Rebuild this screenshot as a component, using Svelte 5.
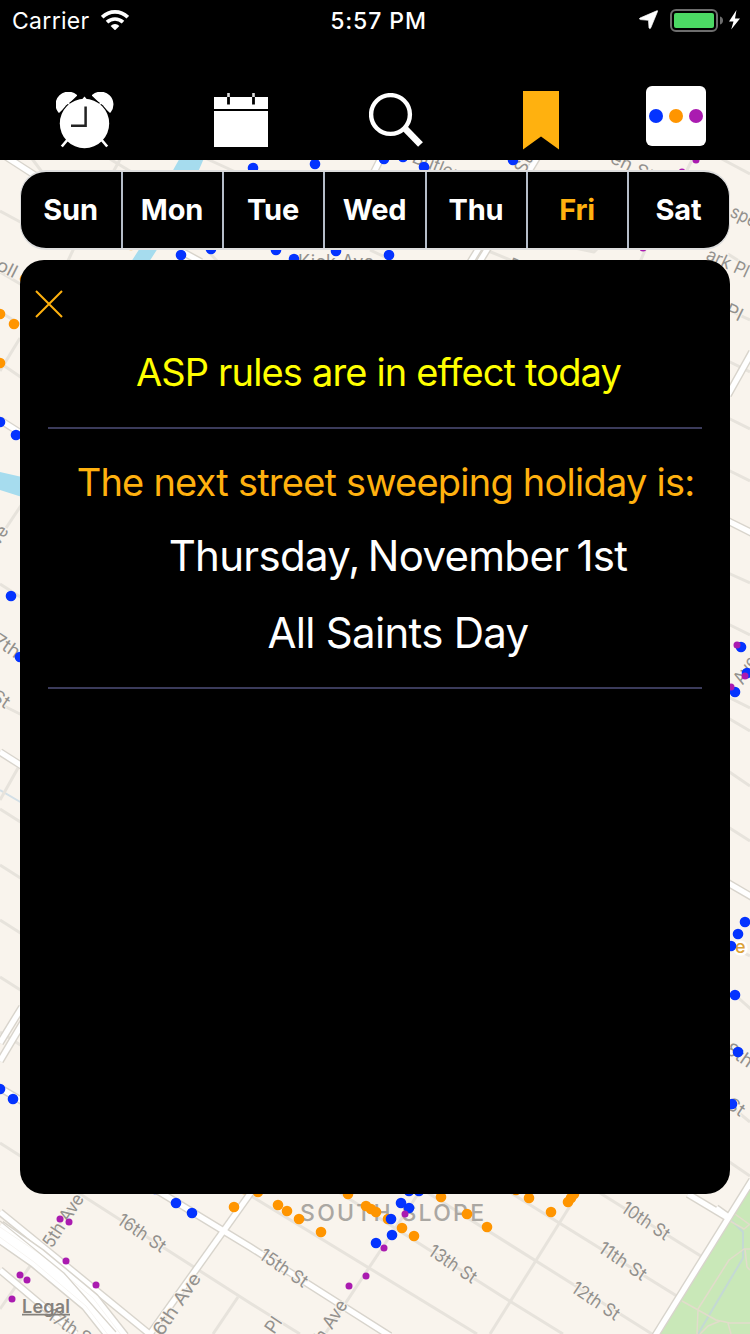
<script>
  const days = ['Sun', 'Mon', 'Tue', 'Wed', 'Thu', 'Fri', 'Sat'];
  const activeDay = 'Fri';

  const minorRoads = [
    'M80 1194L250 1303L300 1334', 'M86 1186L0 1309', 'M238 1297L213 1334', 'M248 1194L477 1334',
    'M418 1194L325 1334', 'M340 1193L500 1295L563 1334', 'M428 1193L652 1334', 'M511 1193L680 1298',
    'M600 1193L704 1258', 'M580 1190L490 1334', 'M74 248L66 265', 'M0 272L22 285', 'M20 338L0 371',
    'M3 365L22 378', 'M0 312L20 324', 'M22 504L6 528', 'M0 584L22 598', 'M4 706L22 715',
    'M18 768L0 800', 'M0 809L22 823', 'M0 865L22 879', 'M0 920L22 934', 'M0 977L22 991',
    'M0 1032L22 1046', 'M0 1143L22 1157', 'M105 156L148 182', 'M122 156L112 174', 'M205 158L240 174',
    'M0 211L24 224', 'M30 156L42 172', 'M728 254L750 268', 'M728 310L750 320', 'M728 361L750 372', 'M728 418L750 429',
    'M728 470L750 481', 'M728 573L750 583', 'M728 624L750 635', 'M728 697L750 708', 'M728 718L750 731',
    'M728 771L750 786', 'M728 827L750 841', 'M728 945L750 956', 'M735 995L752 1010', 'M728 1104L750 1122',
    'M728 1161L750 1176', 'M694 156L684 176', 'M720 158L750 174', 'M486 250L520 264', 'M575 248L594 252L600 246', 'M646 248L640 262', 'M370 250L400 264', 'M205 248L218 262'
  ];
  const majorRoads = [
    'M0 1212L152 1336', 'M0 1270L76 1334', 'M158 1191L250 1247L390 1336', 'M252 1191L150 1334',
    'M688 1194L728 1218', 'M752 1180L655 1336', 'M5 156L36 176', 'M0 420L22 434', 'M0 752L22 766',
    'M22 1007L0 1043', 'M28 1014L0 1061', 'M0 1088L22 1101', 'M752 352L728 395',
    'M728 521L752 533', 'M728 883L752 897', 'M179 250L201 262', 'M538 156L526 176', 'M479 248L468 266', 'M488 248L477 266', 'M382 156L372 176', 'M716 1208L730 1218'
  ];
  const blue = [
    [253,168],[315,164],[384,159],[403,157],[424,167],[513,160],[181,255],[211,249],[276,250],[294,259],
    [336,251],[389,255],[0,422],[16,435],[11,596],[20,657],[0,1089],[13,1099],[176,1203],[192,1213],
    [155,1189],[401,1203],[409,1208],[391,1219],[392,1235],[376,1243],[409,1191],[419,1191],[741,647],
    [747,673],[735,692],[745,922],[738,934],[731,946],[735,995],[738,1052],[732,1104]
  ];
  const orange = [
    [0,314],[14,324],[0,363],[25,279],[131,245],[234,1207],[258,1192],[244,1189],[278,1205],[287,1211],
    [299,1219],[321,1232],[348,1194],[366,1206],[371,1209],[376,1212],[388,1219],[402,1228],[414,1236],
    [441,1197],[467,1214],[487,1227],[529,1198],[551,1212],[516,1190],[568,1202],[571,1198],[574,1194]
  ];
  const purple = [
    [60,1219],[69,1222],[66,1261],[96,1285],[20,1275],[27,1280],[12,1299],[405,1214],[384,1248],[366,1276],
    [349,1286],[696,160],[643,248],[682,172],[737,645],[731,687]
  ];
  const labels = [
    ['5th Ave', 52, 1249, -57, 60], ['16th St', 116, 1223, 34, 54], ['6th Ave', 162, 1337, -56, 71],
    ['15th St', 258, 1258, 34, 54], ['13th St', 427, 1254, 34, 54], ['10th St', 620, 1211, 34, 54],
    ['11th St', 597, 1251, 34, 54], ['12th St', 570, 1291, 34, 54], ['Pl', 274, 1335, -56, 16],
    ['7th Ave', 315, 1356, -57, 61], ['17th St', 46, 1318, 34, 54], ['ark Pl', 705, 259, 25, 45],
    ['Pl', 724, 314, 26, 17], ['spect', 729, 216, 25, 42], ['oll St', -5, 269, 27, 45],
    ['Ave', -8, 556, -56, 31], ['7th', -8, 643, 34, 28], ['St', -10, 699, 34, 18],
    ['8th', 724, 1052, 34, 29], ['St', 725, 1107, 34, 18], ['h Ave', 735, 698, -58, 44],
    ['Butler', 411, 162, 22, 49], ['en St', 609, 162, 26, 46]
  ];
</script>

<main class="screen">
  <svg class="map" viewBox="0 0 750 1334" aria-hidden="true">
    <rect width="750" height="1334" fill="#f9f4ed" />
    <path d="M752 1183L655 1334H750Z" fill="#c9e8b8" />
    <path d="M181 156H205L198 172H172ZM140 248H158L149 262H131ZM0 472L22 477V497L0 490Z" fill="#a6dcee" />
    <g fill="none" stroke-linejoin="round">
      <path d="M732 1221L743 1232V1258L698 1334" stroke="#c4d9d4" stroke-width="2" />
      <path d="M0 790L22 803" stroke="#d3dfe6" stroke-width="2" />
      <path d="M735 1214L750 1225M730 1221L744 1229L750 1224M682 1301L716 1320L730 1323H750M698 1309L729 1260L744 1249H750M745 1249L747 1267L750 1270M698 1310L697 1334M700 1334L708 1326L720 1321M728 1323L731 1334" stroke="#e2dccb" stroke-width="1.5" />
      {#each minorRoads as d}<path {d} stroke="#e7e3dc" stroke-width="3" />{/each}
      {#each majorRoads as d}<path {d} stroke="#d8d4cc" stroke-width="8" />{/each}
      {#each majorRoads as d}<path {d} stroke="#fff" stroke-width="5.2" />{/each}
      <path d="M-3 1230L37 1258L90 1302L120 1340" stroke="#d8d4cc" stroke-width="22" />
      <path d="M-3 1230L37 1258L90 1302L120 1340" stroke="#fff" stroke-width="19" />
      <path d="M-3 1225L40 1254L93 1298L122 1336M-3 1235L34 1262L86 1306L112 1340" stroke="#f7f5f2" stroke-width="1" />
      <path d="M0 1221L64 1273L116 1332" stroke="#d8d4cc" stroke-width="1.2" />
    </g>
    <g class="labels">
      {#each labels as [text, x, y, angle, width]}
        <text transform="translate({x} {y}) rotate({angle})" textLength={width} lengthAdjust="spacingAndGlyphs">{text}</text>
      {/each}
      <text x="298" y="268" textLength="76">Kick Ave</text>
      <text transform="translate(524 175) rotate(-60)">St</text>
      <text transform="translate(507 269) rotate(22)">P</text>
      <text class="poi" x="735" y="953">e</text>
      <text class="district" x="300" y="1221" textLength="184">SOUTH SLOPE</text>
    </g>
    {#each orange as [x, y]}<circle cx={x} cy={y} r="5.3" fill="#ff9500" />{/each}
    {#each blue as [x, y]}<circle cx={x} cy={y} r="5.3" fill="#0433ff" />{/each}
    {#each purple as [x, y]}<circle cx={x} cy={y} r="3.5" fill="#aa1bb0" />{/each}
    <circle cx="745" cy="676" r="3.5" fill="#aa1bb0" />
    <text class="legal" x="22" y="1313" textLength="48">Legal</text>
    <path d="M22 1314.7H70" stroke="#85817c" stroke-width="1.7" />
  </svg>

  <header>
    <div class="status">
      <div class="carrier">
        <span>Carrier</span>
        <svg width="28" height="20" viewBox="0 0 28 20">
          <g fill="none" stroke="#fff" stroke-width="3.7">
            <path d="M1.2 7.2C8.5 .1 19.5 .1 26.8 7.2" />
            <path d="M6 12.2C10.7 7.9 17.3 7.9 22 12.2" />
          </g>
          <path d="M9.6 16.1C12.2 13.4 15.8 13.4 18.4 16.1L14 20.3Z" fill="#fff" />
        </svg>
      </div>
      <time>5:57 PM</time>
      <div class="power">
        <svg width="102" height="24" viewBox="0 0 102 24">
          <path d="M1 9L17.8 1.8Q19 1.3 18.5 2.5L11.8 18.8Q10.8 20.5 10 18.8L9.5 11.3L1.5 10.6Q-.3 10.1 1 9Z" fill="#fff" stroke="#fff" stroke-width=".7" />
          <rect x="32" y="1" width="46" height="21" rx="5" fill="none" stroke="#6d6d6d" stroke-width="2" />
          <rect x="35" y="4" width="40" height="15" rx="2" fill="#4cd964" />
          <path d="M81 7.5Q84 8.4 84 11.5Q84 14.6 81 15.5Z" fill="#6d6d6d" />
          <path d="M97.5 1L90 12.6H94.5L92.2 20.5L101 9.5H96Z" fill="#fff" />
        </svg>
      </div>
    </div>
    <nav>
      <button aria-label="Alarm">
        <svg width="58" height="58" viewBox="0 0 58 58">
          <path d="M3 20A12 12 0 0 1 20.2 3.4ZM54 20A12 12 0 0 0 36.8 3.4Z" fill="#fff" stroke="#fff" stroke-width="1.6" stroke-linejoin="round" />
          <circle cx="28.5" cy="31.5" r="25.8" fill="#000" />
          <path d="M11 10L15 14M46 10L42 14" stroke="#fff" stroke-width="1.5" />
          <path d="M13 46L5.8 54.5M44 46L51.2 54.5" stroke="#fff" stroke-width="2.7" />
          <path d="M25.5 8L28.5 4.6L31.5 8Z" fill="#fff" />
          <circle cx="28.5" cy="31.5" r="24.7" fill="#fff" />
          <path d="M29.6 14.5V33.8H15" fill="none" stroke="#222" stroke-width="2.5" />
        </svg>
      </button>
      <button aria-label="Calendar">
        <svg width="54" height="54" viewBox="0 0 54 54">
          <path d="M0 4H54V16H0ZM0 18H54V54H0Z" fill="#fff" />
          <path d="M14.5 4V11.5M39.5 4V11.5" stroke="#000" stroke-width="2.8" />
          <path d="M14.5 0V4M39.5 0V4" stroke="#ddd" stroke-width="2.6" />
        </svg>
      </button>
      <button aria-label="Search">
        <svg width="55" height="54" viewBox="0 0 55 54" fill="none" stroke="#fff">
          <circle cx="21.5" cy="21.5" r="19.4" stroke-width="4.4" />
          <path d="M35 34.5L51.5 51.5" stroke-width="6.7" />
        </svg>
      </button>
      <button aria-label="Bookmark">
        <svg width="36" height="59" viewBox="0 0 36 59"><path d="M0 0H36V58.5L18 45.5L0 58.5Z" fill="#ffb10f" /></svg>
      </button>
      <button aria-label="More">
        <svg width="62" height="62" viewBox="0 0 62 62">
          <rect x="1" y="1" width="60" height="60" rx="6" fill="#fff" />
          <circle cx="11" cy="31" r="7" fill="#0433ff" />
          <circle cx="31" cy="31" r="7" fill="#ff9500" />
          <circle cx="51" cy="31" r="7" fill="#aa1bb0" />
        </svg>
      </button>
    </nav>
  </header>

  <div class="days">
    {#each days as day}
      <button class:active={day === activeDay}>{day}</button>
    {/each}
  </div>

  <section class="panel">
    <button class="close" aria-label="Close">
      <svg width="28" height="28" viewBox="0 0 28 28"><path d="M1 1L27 27M27 1L1 27" stroke="#ffb10f" stroke-width="2" /></svg>
    </button>
    <p class="rules">ASP rules are in effect today</p>
    <hr />
    <p class="next">The next street sweeping holiday is:</p>
    <p class="date">Thursday, November 1st</p>
    <p class="holiday">All Saints Day</p>
    <hr />
  </section>
</main>

<style>
  :global(body) { margin: 0; background: #f9f4ed; }
  .screen {
    position: relative;
    display: flex;
    flex-direction: column;
    width: 750px;
    height: 1334px;
    overflow: hidden;
    font-family: Inter, sans-serif;
    color: #fff;
  }
  .map { position: absolute; inset: 0; z-index: -1; width: 750px; height: 1334px; }
  .labels { font: 18px Inter, sans-serif; fill: #93918d; stroke: #f9f4ed; stroke-width: 2px; paint-order: stroke; }
  .labels .poi { fill: #dca238; font-weight: 500; stroke: #fff; stroke-width: 5px; }
  .labels .district { font-size: 23px; font-weight: 500; fill: #aaa7a2; stroke-width: 0; }
  .legal { font: 600 18px Inter, sans-serif; fill: #85817c; }
  button { padding: 0; border: 0; background: none; color: inherit; font: inherit; }
  svg { display: block; }
  header { flex: none; height: 160px; background: #000; }
  .status {
    display: grid;
    grid-template-columns: 1fr auto 1fr;
    align-items: center;
    box-sizing: border-box;
    height: 42px;
    padding: 0 9px 0 12px;
    font-size: 23px;
    line-height: 42px;
  }
  .carrier { display: flex; align-items: center; gap: 11px; letter-spacing: 0.3px; }
  .carrier svg { margin-top: -2px; }
  time { font-weight: 500; letter-spacing: 0.9px; margin-left: 4px; }
  .power { display: flex; justify-content: flex-end; }
  nav {
    display: grid;
    grid-template-columns: 170px 142px 169px 120px 149px;
    height: 118px;
    align-items: end;
  }
  nav button { display: flex; justify-content: center; padding-bottom: 13px; }
  nav button:nth-child(1) { padding-bottom: 10px; }
  nav button:nth-child(4) { padding-bottom: 10px; }
  .days {
    display: grid;
    grid-template-columns: 102px 101px 101px 102px 101px 101px 1fr;
    flex: none;
    box-sizing: border-box;
    height: 80px;
    margin: 10px 20px 0;
    border: 2px solid #dedede;
    border-left-width: 1px;
    border-right-width: 1px;
    border-radius: 26px;
    overflow: hidden;
    background: #000;
  }
  .days button { padding: 0 1px 2px 0; font-size: 29px; font-weight: 700; letter-spacing: -0.2px; border-right: 2px solid #b5bdc9; }
  .days button:last-child { border-right: 0; }
  .days .active { color: #ffb10f; }
  .panel {
    display: flex;
    flex-direction: column;
    flex: none;
    box-sizing: border-box;
    height: 934px;
    margin: 10px 20px 0;
    padding: 30px 28px 0;
    border-radius: 24px;
    background: #000;
  }
  .close { align-self: flex-start; margin-left: -13px; }
  p { margin: 0; text-align: center; white-space: nowrap; font-variant-ligatures: none; }
  hr { width: 100%; height: 2px; margin: 0; border: 0; background: #3b3b5b; }
  .rules { height: 50px; margin: 29px 0 30px; padding-left: 7px; font-size: 38px; line-height: 50px; letter-spacing: -0.84px; color: #ff0; }
  .next { height: 50px; margin-top: 28px; padding-left: 21px; font-size: 38px; line-height: 50px; letter-spacing: -0.77px; color: #ffb10f; }
  .date { height: 60px; margin-top: 19px; padding-left: 46px; font-size: 42px; line-height: 60px; letter-spacing: -0.7px; word-spacing: -3px; }
  .holiday { height: 60px; margin: 17px 0 24px; padding-left: 46px; font-size: 42px; line-height: 60px; letter-spacing: -0.7px; }
</style>
